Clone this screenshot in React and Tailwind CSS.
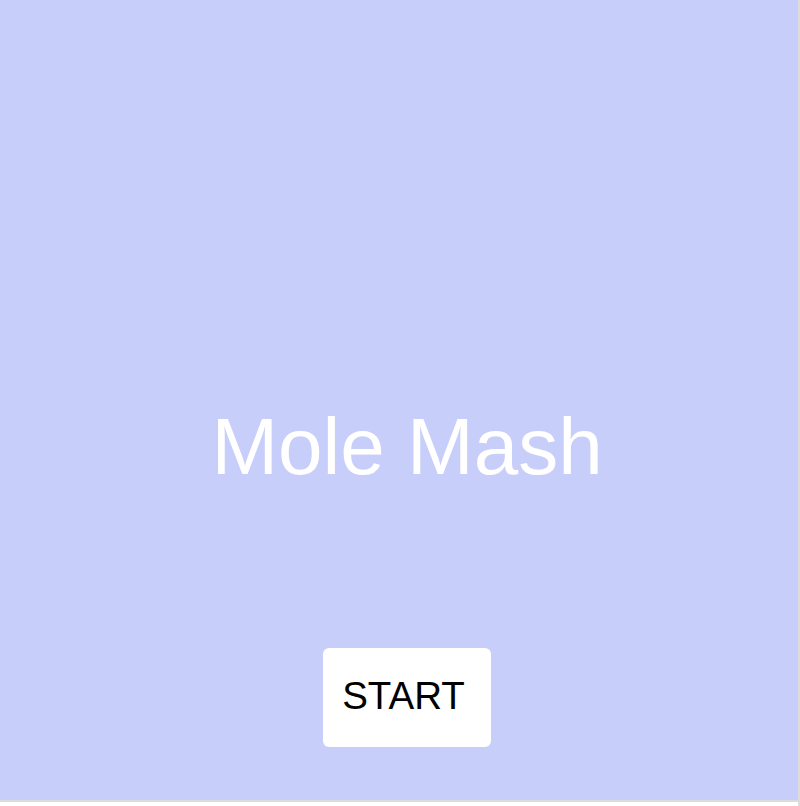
export default function App() {
  return (
    <div className="flex h-[806px] w-[800px] bg-white" style={{ fontFamily: '"Liberation Sans", Arial, sans-serif' }}>
      <div className="flex h-[802px] w-[798px] flex-col items-center border-b-2 border-[#dcdcdc] bg-[#c8cefa] pl-[16px] pt-[407px]">
        <h1 className="text-[80px] leading-none font-normal text-white">Mole Mash</h1>
        <button className="mt-[161px] flex h-[99px] w-[168px] items-center justify-center rounded-md bg-white pr-[7px] pb-[3px] text-[38.5px] leading-none text-black">
          START
        </button>
      </div>
      <div className="h-[806px] w-[2px] bg-[#dcdcdc]" />
    </div>
  );
}
